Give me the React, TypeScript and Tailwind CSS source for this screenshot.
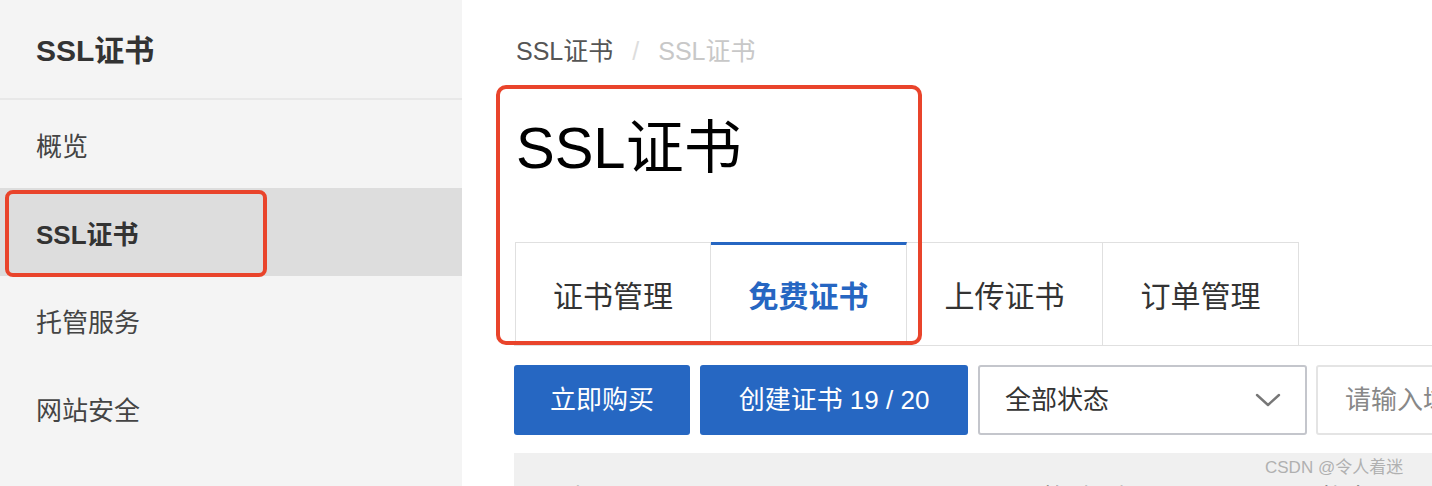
const menu = ["概览", "SSL证书", "托管服务", "网站安全"];
const tabs = ["证书管理", "免费证书", "上传证书", "订单管理"];

export default function App() {
  return (
    <div
      className="relative flex h-[486px] w-[1432px] overflow-hidden bg-white"
      style={{ fontFamily: '"Liberation Sans", "Noto Sans CJK SC", sans-serif' }}
    >
      {/* sidebar */}
      <aside className="w-[462px] shrink-0 bg-[#f4f4f4]">
        <div className="flex h-[98px] items-center pl-9 pt-[3px] text-[30px] font-bold text-[#333]">
          SSL证书
        </div>
        <div className="h-[2px] bg-[#e8e8e8]" />
        {menu.map((item) => (
          <div
            key={item}
            className={
              item === "SSL证书"
                ? "flex h-[88px] items-center bg-[#dddddd] pl-9 pt-[7px] text-[26px] font-bold text-[#333]"
                : "flex h-[88px] items-center pl-9 pt-[7px] text-[26px] text-[#444]"
            }
          >
            {item}
          </div>
        ))}
      </aside>

      {/* main */}
      <main className="min-w-0 flex-1 pl-[52px]">
        <div className="flex items-center pt-[35px] text-[25px] leading-[32px]">
          <span className="pl-[2px] text-[#555]">SSL证书</span>
          <span className="mx-[19px] text-[#ddd]">/</span>
          <span className="text-[#c8c8c8]">SSL证书</span>
        </div>

        <h1 className="mt-[49px] pl-[2px] text-[58px] leading-[64px] text-black">SSL证书</h1>

        <div className="mt-[62px] flex border-b border-[#e0e0e0] pl-[1px]">
          {tabs.map((t, i) => (
            <div
              key={t}
              className={
                i === 1
                  ? "flex h-[103px] w-[196px] items-center justify-center border-r border-t-[3px] border-[#e0e0e0] border-t-[#2666c2] pt-[2px] text-[30px] font-bold text-[#2666c2]"
                  : i === 0
                    ? "flex h-[103px] w-[196px] items-center justify-center border-l border-r border-t border-[#e0e0e0] pt-[4px] text-[30px] text-[#333]"
                    : "flex h-[103px] w-[196px] items-center justify-center border-r border-t border-[#e0e0e0] pt-[4px] text-[30px] text-[#333]"
              }
            >
              {t}
            </div>
          ))}
        </div>

        <div className="mt-[19px] flex h-[70px] gap-[10px]">
          <button className="w-[176px] shrink-0 rounded-[3px] bg-[#2667c2] text-[26px] text-white">
            立即购买
          </button>
          <button className="w-[268px] shrink-0 rounded-[3px] bg-[#2667c2] text-[26px] text-white">
            创建证书 19 / 20
          </button>
          <div className="flex w-[329px] shrink-0 items-center justify-between rounded-[3px] border-2 border-[#c4c6cc] pl-[25px] pr-[24px] text-[26px] text-[#333]">
            <span>全部状态</span>
            <svg width="26" height="16" viewBox="0 0 26 16" fill="none">
              <path d="M2 3 L13 13 L24 3" stroke="#777" strokeWidth="2.4" strokeLinecap="round" strokeLinejoin="round" />
            </svg>
          </div>
          <div className="ml-[-1px] w-[300px] shrink-0 overflow-hidden whitespace-nowrap rounded-[3px] border-2 border-[#e4e4e4] pl-[27px] text-[26px] leading-[66px] text-[#888]">
            请输入域名
          </div>
        </div>

        <div className="mt-[18px] flex h-[84px] items-center bg-[#f0f0f0] pt-[8px] text-[26px] text-[#333]">
          <span className="w-[500px] pl-[26px]">证书</span>
          <span className="w-[305px]">品牌/类型</span>
          <span>状态</span>
        </div>
      </main>

      {/* annotation boxes */}
      <div className="absolute left-[5px] top-[190px] h-[87px] w-[262px] rounded-[8px] border-[4px] border-[#e9442b]" />
      <div className="absolute left-[496px] top-[85px] h-[260px] w-[426px] rounded-[10px] border-[4px] border-[#e9442b]" />

      <div className="absolute left-[1265px] top-[455px] text-[17px] text-[#b0b0b0]">CSDN @令人着迷</div>
    </div>
  );
}
